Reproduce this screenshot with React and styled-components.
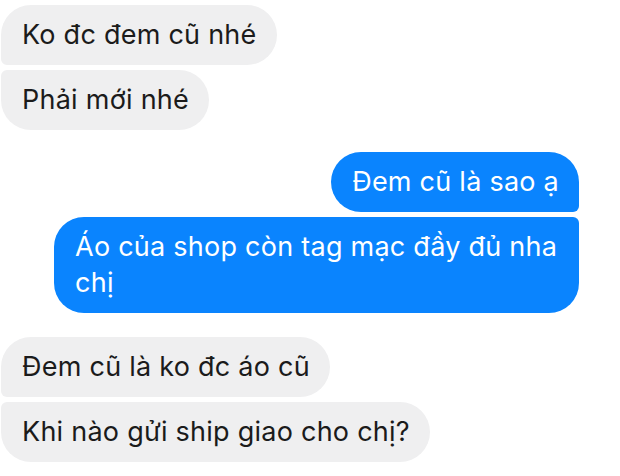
import React from 'react';
import styled, { createGlobalStyle } from 'styled-components';

const GlobalStyle = createGlobalStyle`
  body {
    margin: 0;
    background: #fff;
    font-family: Inter, "Liberation Sans", sans-serif;
  }
`;

const Thread = styled.div`
  display: flex;
  flex-direction: column;
  gap: 5px;
  padding: 5px 41px 0 1px;
`;

const Group = styled.div`
  display: flex;
  flex-direction: column;
  gap: 5px;
  align-items: ${(p) => (p.mine ? 'flex-end' : 'flex-start')};
  margin-top: ${(p) => p.spaced || 0}px;
`;

const Bubble = styled.div`
  max-width: 525px;
  box-sizing: border-box;
  padding: 12px 20px 12px 21px;
  font-size: 27px;
  line-height: 36px;
  letter-spacing: 0.25px;
  background: ${(p) => (p.mine ? '#0a84fe' : '#efeff0')};
  color: ${(p) => (p.mine ? '#fff' : '#1b1b1b')};
  border-radius: ${(p) => {
    const big = '30px';
    const small = '6px';
    if (p.mine) {
      return p.first ? `${big} ${big} ${small} ${big}` : `${big} ${small} ${big} ${big}`;
    }
    return p.first ? `${big} ${big} ${big} ${small}` : `${small} ${big} ${big} ${big}`;
  }};
`;

const App = () => {
  return (
    <>
      <GlobalStyle />
      <Thread>
        <Group>
          <Bubble first>Ko đc đem cũ nhé</Bubble>
          <Bubble>Phải mới nhé</Bubble>
        </Group>
        <Group mine spaced={17}>
          <Bubble mine first>Đem cũ là sao ạ</Bubble>
          <Bubble mine>Áo của shop còn tag mạc đầy đủ nha chị</Bubble>
        </Group>
        <Group spaced={19}>
          <Bubble first>Đem cũ là ko đc áo cũ</Bubble>
          <Bubble>Khi nào gửi ship giao cho chị?</Bubble>
        </Group>
      </Thread>
    </>
  );
};

export default App;
